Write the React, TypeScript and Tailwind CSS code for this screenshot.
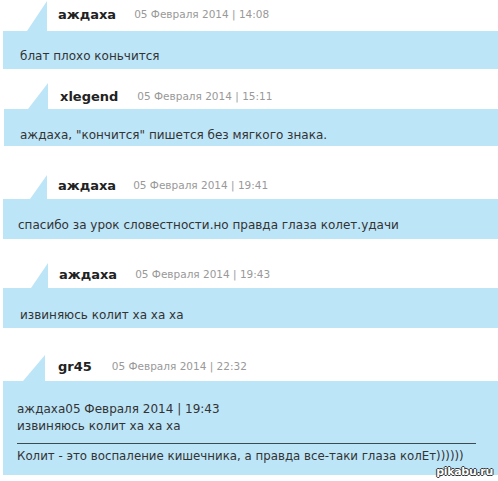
import React from "react";

function Tail({ className }: { className: string }) {
  return (
    <svg className={className} viewBox="0 0 20 26" preserveAspectRatio="none">
      <polygon points="0,26 20,0 20,26" fill="#bde5f8" />
    </svg>
  );
}

function Comment({
  wrap,
  head,
  tail,
  name,
  nameCls,
  date,
  body,
  children,
}: {
  wrap: string;
  head: string;
  tail: string;
  name: string;
  nameCls: string;
  date: string;
  body: string;
  children: React.ReactNode;
}) {
  return (
    <div className={wrap}>
      <div className={`flex items-stretch ${head}`}>
        <Tail className={tail} />
        <div className={`flex items-center ${nameCls}`}>
          <span className="text-[13px] font-bold text-[#222]">{name}</span>
          <span className="text-[10.5px] text-[#999]">{date}</span>
        </div>
      </div>
      <div className={`bg-[#bde5f8] text-[12px] text-[#333] ${body}`}>{children}</div>
    </div>
  );
}

export default function App() {
  return (
    <div className="relative w-[498px] h-[481px] overflow-hidden bg-white font-['DejaVu_Sans',sans-serif] leading-none">
      <Comment
        wrap="pl-[3px]"
        head="h-[31px] pt-[1px]"
        tail="ml-[24px] w-[20px] h-[30px]"
        name="аждаха"
        nameCls="ml-[11px] gap-[18px] pb-[3px]"
        date="05 Февраля 2014 | 14:08"
        body="h-[38px] pt-[19px] pl-[17px]"
      >
        блат плохо коньчится
      </Comment>

      <Comment
        wrap="pl-[4px] mt-[14px]"
        head="h-[26px]"
        tail="ml-[24px] w-[20px] h-[26px]"
        name="xlegend"
        nameCls="ml-[12px] gap-[19px] pt-[1px]"
        date="05 Февраля 2014 | 15:11"
        body="h-[37px] pt-[20px] pl-[16px]"
      >
        аждаха, "кончится" пишется без мягкого знака.
      </Comment>

      <Comment
        wrap="pl-[3px] mt-[29px]"
        head="h-[24px]"
        tail="ml-[27px] w-[17px] h-[24px]"
        name="аждаха"
        nameCls="ml-[11px] gap-[17px] pb-[3px]"
        date="05 Февраля 2014 | 19:41"
        body="h-[40px] pt-[20px] pl-[15px]"
      >
        спасибо за урок словестности.но правда глаза колет.удачи
      </Comment>

      <Comment
        wrap="pl-[3px] mt-[24px]"
        head="h-[25px]"
        tail="ml-[28px] w-[17px] h-[25px]"
        name="аждаха"
        nameCls="ml-[11px] gap-[18px] pb-[2px]"
        date="05 Февраля 2014 | 19:43"
        body="h-[40px] pt-[21px] pl-[17px]"
      >
        извиняюсь колит ха ха ха
      </Comment>

      <Comment
        wrap="pl-[3px] mt-[27px]"
        head="h-[26px]"
        tail="ml-[20px] w-[22px] h-[26px]"
        name="gr45"
        nameCls="ml-[13px] gap-[20px] pb-[4px]"
        date="05 Февраля 2014 | 22:32"
        body="h-[94px] pt-[20px] pl-[14px] pr-[22px]"
      >
        <div className="leading-[17px]">аждаха05 Февраля 2014 | 19:43</div>
        <div className="leading-[17px]">извиняюсь колит ха ха ха</div>
        <div className="mt-[8px] h-[1px] bg-[#3d4a52]" />
        <div className="mt-[4px] leading-[17px] text-[11.8px]">Колит - это воспаление кишечника, а правда все-таки глаза колЕт))))))</div>
      </Comment>

      <div className="absolute right-[5px] bottom-[4px] text-[11px] font-bold text-white tracking-[-0.3px] [text-shadow:-1px_0_#333,1px_0_#333,0_-1px_#333,0_1px_#333]">
        pikabu.ru
      </div>
    </div>
  );
}
